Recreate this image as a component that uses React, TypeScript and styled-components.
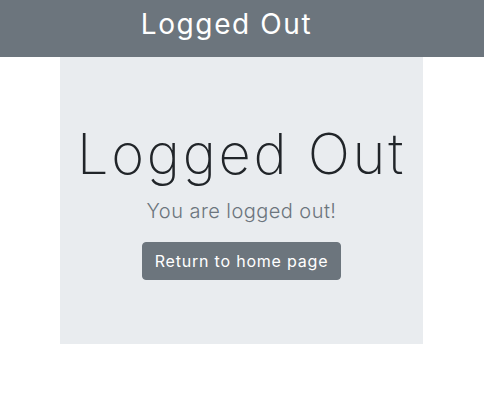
import React from "react";
import styled, { createGlobalStyle } from "styled-components";

const Global = createGlobalStyle`
  html, body { margin: 0; padding: 0; background: #fff; }
  body { font-family: Inter, "Open Sans", sans-serif; color: #212529; }
`;

const Header = styled.header`
  height: 57px;
  background: #6c757d;
  display: flex;
  align-items: center;
  justify-content: center;
  padding-right: 31px;
  box-sizing: border-box;
`;

const HeaderTitle = styled.h1`
  margin: 0 0 7px;
  font-size: 28px;
  font-weight: 400;
  letter-spacing: 1.6px;
  color: #fff;
  line-height: 1.2;
`;

const Panel = styled.main`
  width: 363px;
  margin: 0 61px 0 60px;
  box-sizing: border-box;
  background: #e9ecef;
  padding: 64px 0;
  display: flex;
  flex-direction: column;
  align-items: center;
`;

const Title = styled.h2`
  margin: 0 0 8px;
  font-size: 56px;
  font-weight: 200;
  letter-spacing: 2.7px;
  line-height: 67px;
  color: #212529;
`;

const Lead = styled.p`
  margin: 0 0 16px;
  font-size: 20px;
  font-weight: 300;
  letter-spacing: 0.45px;
  line-height: 30px;
  color: #6c757d;
`;

const Button = styled.button`
  height: 38px;
  width: 199px;
  box-sizing: border-box;
  border: 1px solid #6c757d;
  border-radius: 4px;
  background: #6c757d;
  color: #fff;
  font-family: inherit;
  font-size: 16px;
  font-weight: 400;
  letter-spacing: 0.8px;
  padding: 0 8px;
  cursor: pointer;
`;

export default function App() {
  return (
    <>
      <Global />
      <Header>
        <HeaderTitle>Logged Out</HeaderTitle>
      </Header>
      <Panel>
        <Title>Logged Out</Title>
        <Lead>You are logged out!</Lead>
        <Button>Return to home page</Button>
      </Panel>
    </>
  );
}
